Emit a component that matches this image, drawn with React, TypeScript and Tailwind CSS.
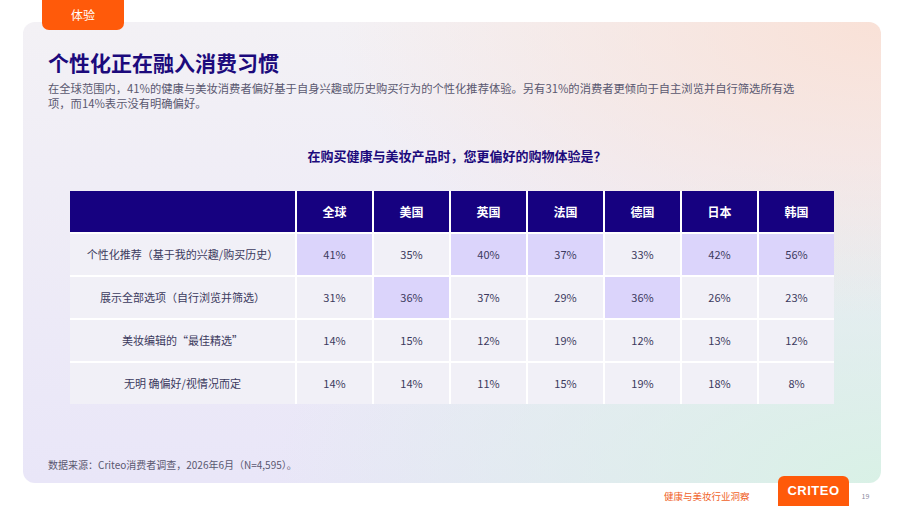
import React from 'react';

const FONT = '"Noto Sans CJK SC", "Noto Sans", "Liberation Sans", sans-serif';

const countries = ['全球', '美国', '英国', '法国', '德国', '日本', '韩国'];

const rows: { label: string; values: string[]; hi: number[] }[] = [
  { label: '个性化推荐（基于我的兴趣/购买历史）', values: ['41%', '35%', '40%', '37%', '33%', '42%', '56%'], hi: [0, 2, 3, 5, 6] },
  { label: '展示全部选项（自行浏览并筛选）', values: ['31%', '36%', '37%', '29%', '36%', '26%', '23%'], hi: [1, 4] },
  { label: '美妆编辑的“最佳精选”', values: ['14%', '15%', '12%', '19%', '12%', '13%', '12%'], hi: [] },
  { label: '无明 确偏好/视情况而定', values: ['14%', '14%', '11%', '15%', '19%', '18%', '8%'], hi: [] },
];

export default function App() {
  return (
    <div className="relative h-[506px] w-[902px] overflow-hidden bg-white" style={{ fontFamily: FONT }}>
      {/* section tab */}
      <div className="absolute left-[42px] top-0 z-10 flex h-[30px] w-[82px] items-center justify-center rounded-b-[7px] bg-[#ff5a0a] text-[12px] text-white">
        体验
      </div>

      <div className="ml-[23px] mt-[22px] flex h-[461px] w-[858px] flex-col rounded-[12px] bg-[radial-gradient(ellipse_at_top_right,#f9e1d7_0%,transparent_45%),radial-gradient(ellipse_at_bottom_right,#d9f1e6_0%,transparent_50%),linear-gradient(to_bottom,#f3f1f5,#e9e6f8)] px-[25px] pt-[27px]">
        <h1 className="text-[21px] font-bold leading-[26px] text-[#1c0a7c]">个性化正在融入消费习惯</h1>
        <p className="mt-[6px] text-[11.3px] leading-[14.5px] text-[#5a5870]">
          在全球范围内，41%的健康与美妆消费者偏好基于自身兴趣或历史购买行为的个性化推荐体验。另有31%的消费者更倾向于自主浏览并自行筛选所有选
          <br />
          项，而14%表示没有明确偏好。
        </p>

        <h2 className="mt-[37px] pl-[10px] text-center text-[13px] font-bold leading-[18px] text-[#1c0a7c]">
          在购买健康与美妆产品时，您更偏好的购物体验是？
        </h2>

        <div className="mx-auto mt-[26px] grid grid-cols-[225px_repeat(7,75px)] gap-[2px] bg-white">
          <div className="h-[41px] bg-[#160180]" />
          {countries.map((c) => (
            <div key={c} className="flex h-[41px] items-center justify-center bg-[#160180] text-[12px] font-bold text-white">
              {c}
            </div>
          ))}
          {rows.map((r) => (
            <React.Fragment key={r.label}>
              <div className="flex h-[41px] items-center justify-center bg-[#f1f0f7] text-[11px] text-[#3c3a5e]">{r.label}</div>
              {r.values.map((v, i) => (
                <div
                  key={i}
                  className={`flex h-[41px] items-center justify-center text-[11px] text-[#3c3a5e] ${
                    r.hi.includes(i) ? 'bg-[#dbd4fb]' : 'bg-[#f1f0f7]'
                  }`}
                >
                  {v}
                </div>
              ))}
            </React.Fragment>
          ))}
        </div>

        <p className="mb-[12px] mt-auto text-[10px] leading-[12px] text-[#5a5870]">
          数据来源：Criteo消费者调查，2026年6月（N=4,595）。
        </p>
      </div>

      {/* footer */}
      <div className="flex h-[23px] items-center pt-[3px]">
        <span className="ml-[664px] text-[9.5px] text-[#f0622a]">健康与美妆行业洞察</span>
        <span className="ml-[112px] text-[7px] text-[#8a8aa0]">19</span>
      </div>
      <div className="absolute left-[778px] top-[476px] flex h-[30px] w-[71px] items-center justify-center rounded-t-[6px] bg-[#ff5a0a] text-[13px] font-black tracking-[0.5px] text-white" style={{ fontFamily: '"Liberation Sans", sans-serif' }}>
        CRITEO
      </div>
    </div>
  );
}
